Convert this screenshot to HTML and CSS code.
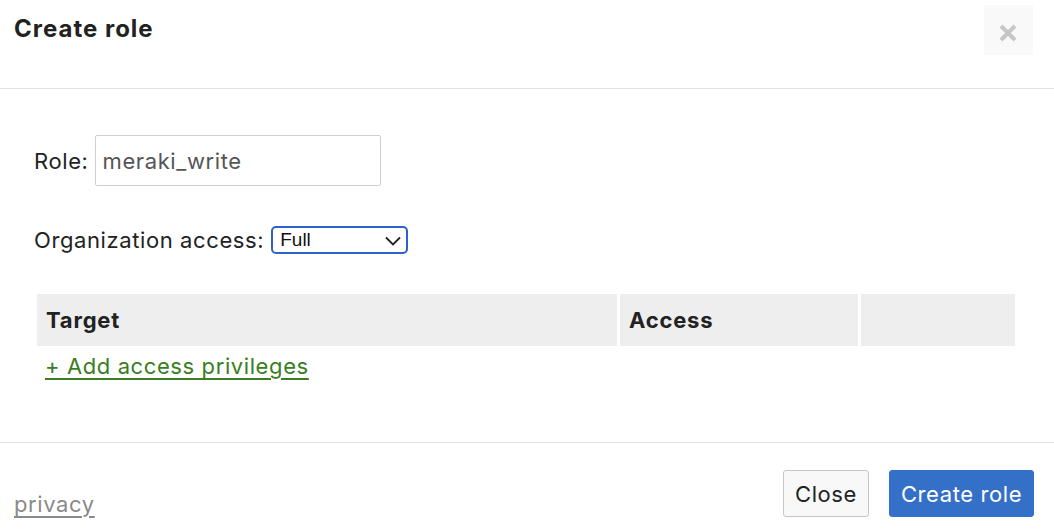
FILE: index.html
```html
<!DOCTYPE html>
<html>
<head>
<meta charset="utf-8">
<link rel="stylesheet" href="styles.css">
</head>
<body>
<div class="dialog">
  <div class="header">
    <h1 class="title">Create role</h1>
    <button class="close-x" aria-label="Close">
      <svg width="18" height="18" viewBox="0 0 18 18"><path d="M2 2 L16 16 M16 2 L2 16" stroke="#c6c6c6" stroke-width="4" stroke-linecap="butt"/></svg>
    </button>
  </div>
  <div class="body">
    <div class="row role-row">
      <label class="label">Role:</label>
      <input class="text-input" type="text" value="meraki_write">
    </div>
    <div class="row org-row">
      <label class="label">Organization access:</label>
      <div class="select">
        <span class="select-value">Full</span>
        <svg class="chev" width="16" height="10" viewBox="0 0 16 10"><path d="M1 1.5 L8 8.5 L15 1.5" fill="none" stroke="#222" stroke-width="1.8"/></svg>
      </div>
    </div>
    <div class="table">
      <div class="th th-target">Target</div>
      <div class="th th-access">Access</div>
      <div class="th th-empty"></div>
    </div>
    <a class="add-link" href="#">+ Add access privileges</a>
  </div>
  <div class="footer">
    <a class="privacy" href="#">privacy</a>
    <div class="actions">
      <button class="btn btn-close">Close</button>
      <button class="btn btn-primary">Create role</button>
    </div>
  </div>
</div>
</body>
</html>
```

FILE: styles.css
```css
* { box-sizing: border-box; }
html, body { margin: 0; padding: 0; background: #fff; }
body {
  font-family: Inter, "Noto Sans", sans-serif;
  color: #222;
  width: 1054px;
  height: 532px;
  overflow: hidden;
}
.dialog { display: flex; flex-direction: column; height: 532px; }
.header {
  height: 89px;
  border-bottom: 1px solid #e2e2e2;
  display: flex;
  justify-content: space-between;
  align-items: flex-start;
  padding: 0 22px 0 14px;
}
.title {
  margin: 14px 0 0 0;
  font-size: 24px;
  font-weight: 700;
  line-height: 30px;
  letter-spacing: 1px;
  color: #222;
}
.close-x {
  margin-top: 5px;
  width: 49px;
  height: 50px;
  border: none;
  background: #f9f9f9;
  display: flex;
  align-items: center;
  justify-content: center;
  padding: 6px 2px 0 0;
  margin-right: -1px;
}
.body {
  height: 354px;
  border-bottom: 1px solid #e2e2e2;
  padding: 46px 38px 0 34px;
}
.row { display: flex; align-items: center; }
.label { font-size: 22px; line-height: 28px; letter-spacing: 0.6px; color: #222; }
.role-row { gap: 6px; }
.text-input {
  width: 286px;
  height: 51px;
  border: 1px solid #cfcfcf;
  border-radius: 2px;
  font-family: Inter, "Noto Sans", sans-serif;
  font-size: 22px;
  letter-spacing: 0.6px;
  color: #555;
  padding: 0 7px;
  outline: none;
}
.org-row { margin-top: 40px; gap: 7px; }
.select {
  width: 137px;
  height: 28px;
  border: 2px solid #2f62c8;
  border-radius: 5px;
  display: flex;
  align-items: center;
  justify-content: space-between;
  padding: 0 5px 0 7px;
  font-family: "Liberation Sans", Arial, sans-serif;
  font-size: 19px;
  color: #111;
}
.chev { margin-top: 1px; }
.table {
  margin: 40px 0 0 3px;
  display: grid;
  grid-template-columns: 580px 238px 154px;
  gap: 3px;
  height: 52px;
}
.th {
  background: #eeeeee;
  font-size: 22px;
  font-weight: 700;
  letter-spacing: 0.8px;
  color: #222;
  padding: 13px 9px 0;
  line-height: 26px;
}
.add-link {
  display: inline-block;
  margin: 6px 0 0 11px;
  font-size: 22px;
  line-height: 28px;
  letter-spacing: 0.6px;
  color: #3a7d22;
  text-decoration: underline;
  text-underline-offset: 4px;
  text-decoration-thickness: 2px;
}
.footer {
  flex: 1;
  display: flex;
  justify-content: space-between;
  align-items: flex-start;
  padding: 0 20px 0 14px;
}
.privacy {
  margin-top: 47px;
  font-size: 22px;
  line-height: 28px;
  letter-spacing: 0.6px;
  color: #8a8a8a;
  text-decoration: underline;
  text-underline-offset: 4px;
}
.actions { display: flex; gap: 20px; margin-top: 27px; }
.btn {
  height: 47px;
  font-family: Inter, "Noto Sans", sans-serif;
  font-size: 22px;
  letter-spacing: 0.6px;
  border-radius: 3px;
  padding: 0;
}
.btn-close {
  width: 86px;
  background: #f8f8f8;
  border: 1px solid #c6c6c6;
  color: #222;
}
.btn-primary {
  width: 145px;
  background: #3570c8;
  border: 1px solid #3570c8;
  color: #fff;
}
```
